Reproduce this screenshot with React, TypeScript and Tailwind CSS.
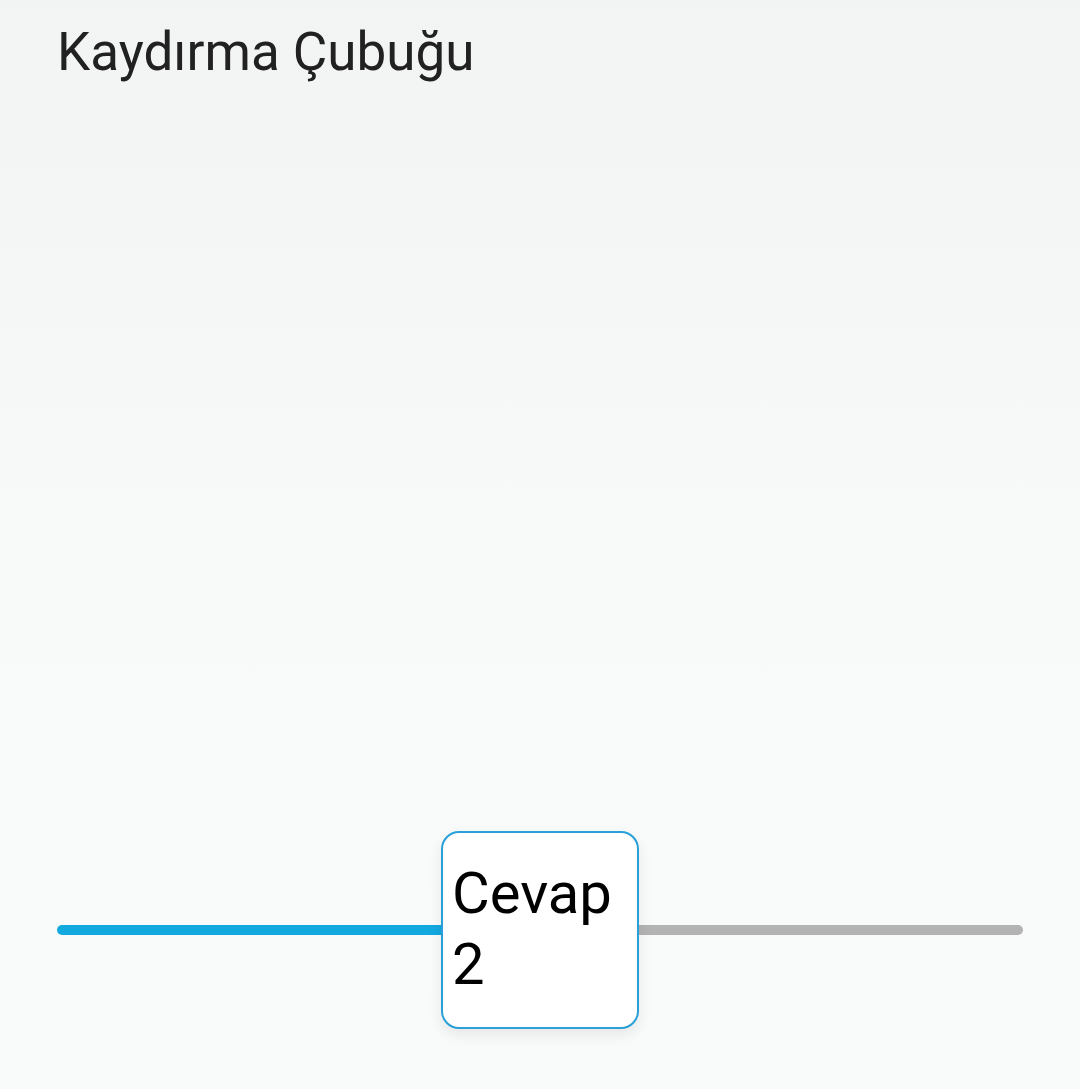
export default function App() {
  return (
    <div className="flex h-[1089px] w-[1080px] flex-col bg-gradient-to-b from-[#f2f3f3] via-[#f8faf9] via-50% to-[#f8fbfa] font-['Roboto',sans-serif]">
      <h1 className="pl-[57px] pt-[20px] text-[53px] leading-[64px] text-[#212121]">Kaydırma Çubuğu</h1>
      <div className="relative mx-[57px] mt-[841px] h-[10px]">
        <div className="flex h-full w-full">
          <div className="h-full w-[390px] rounded-l-full bg-[#12a9e0]" />
          <div className="h-full flex-1 rounded-r-full bg-[#b3b3b3]" />
        </div>
        <div className="absolute left-[384px] top-[-94px] h-[198px] w-[198px] rounded-[18px] border-2 border-[#2aa0d8] bg-white pl-[9px] pt-[25px] text-[58px] leading-[71px] text-black shadow-[0_6px_14px_rgba(0,0,0,0.08)]">
          Cevap 2
        </div>
      </div>
    </div>
  );
}
